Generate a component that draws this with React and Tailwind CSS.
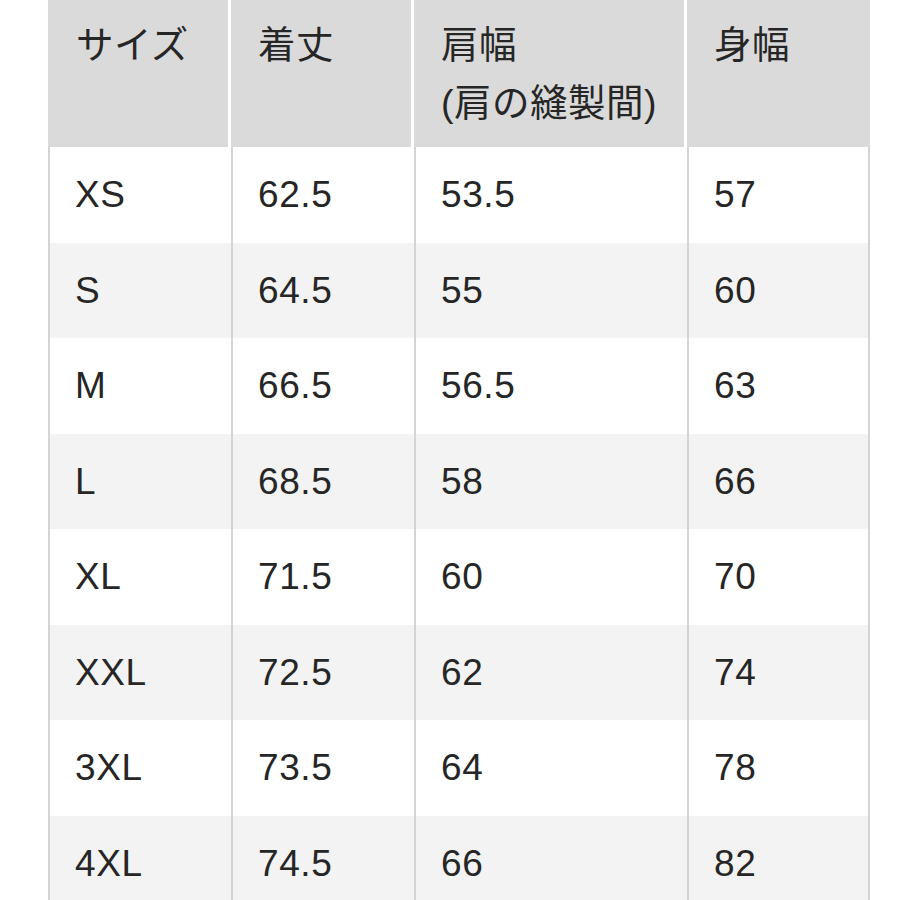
import React from "react";

const rows = [
  ["XS", "62.5", "53.5", "57"],
  ["S", "64.5", "55", "60"],
  ["M", "66.5", "56.5", "63"],
  ["L", "68.5", "58", "66"],
  ["XL", "71.5", "60", "70"],
  ["XXL", "72.5", "62", "74"],
  ["3XL", "73.5", "64", "78"],
  ["4XL", "74.5", "66", "82"],
];

const font = {
  fontFamily: '"Liberation Sans", "Noto Sans CJK JP", sans-serif',
};

export default function App() {
  return (
    <div className="w-[900px] h-[900px] overflow-hidden bg-white pl-[48px] text-[#262626]" style={font}>
      <div className="w-[822px]">
        <div className="grid grid-cols-[183px_183px_273px_183px] h-[147px] text-[37.5px] leading-[58px] tracking-[0.5px]">
          <div className="bg-[#dadada] border-r-[3px] border-white pl-[28px] pt-[16px]">サイズ</div>
          <div className="bg-[#dadada] border-r-[3px] border-white pl-[27px] pt-[16px]">着丈</div>
          <div className="bg-[#dadada] border-r-[3px] border-white pl-[27px] pt-[16px]">
            肩幅
            <br />
            (肩の縫製間)
          </div>
          <div className="bg-[#dadada] pl-[27px] pt-[16px]">身幅</div>
        </div>
        {rows.map((r, i) => (
          <div
            key={r[0]}
            className={
              "grid grid-cols-[183px_183px_273px_183px] h-[95.5px] text-[37px] tracking-[0.6px] " +
              (i % 2 === 1 ? "bg-[#f3f3f3]" : "bg-white")
            }
          >
            {r.map((c, j) => (
              <div
                key={j}
                className={
                  "flex items-center border-l-2 border-[#d4d4d4] pl-[25px] " +
                  (j === 3 ? "border-r-2" : "")
                }
              >
                {c}
              </div>
            ))}
          </div>
        ))}
      </div>
    </div>
  );
}
